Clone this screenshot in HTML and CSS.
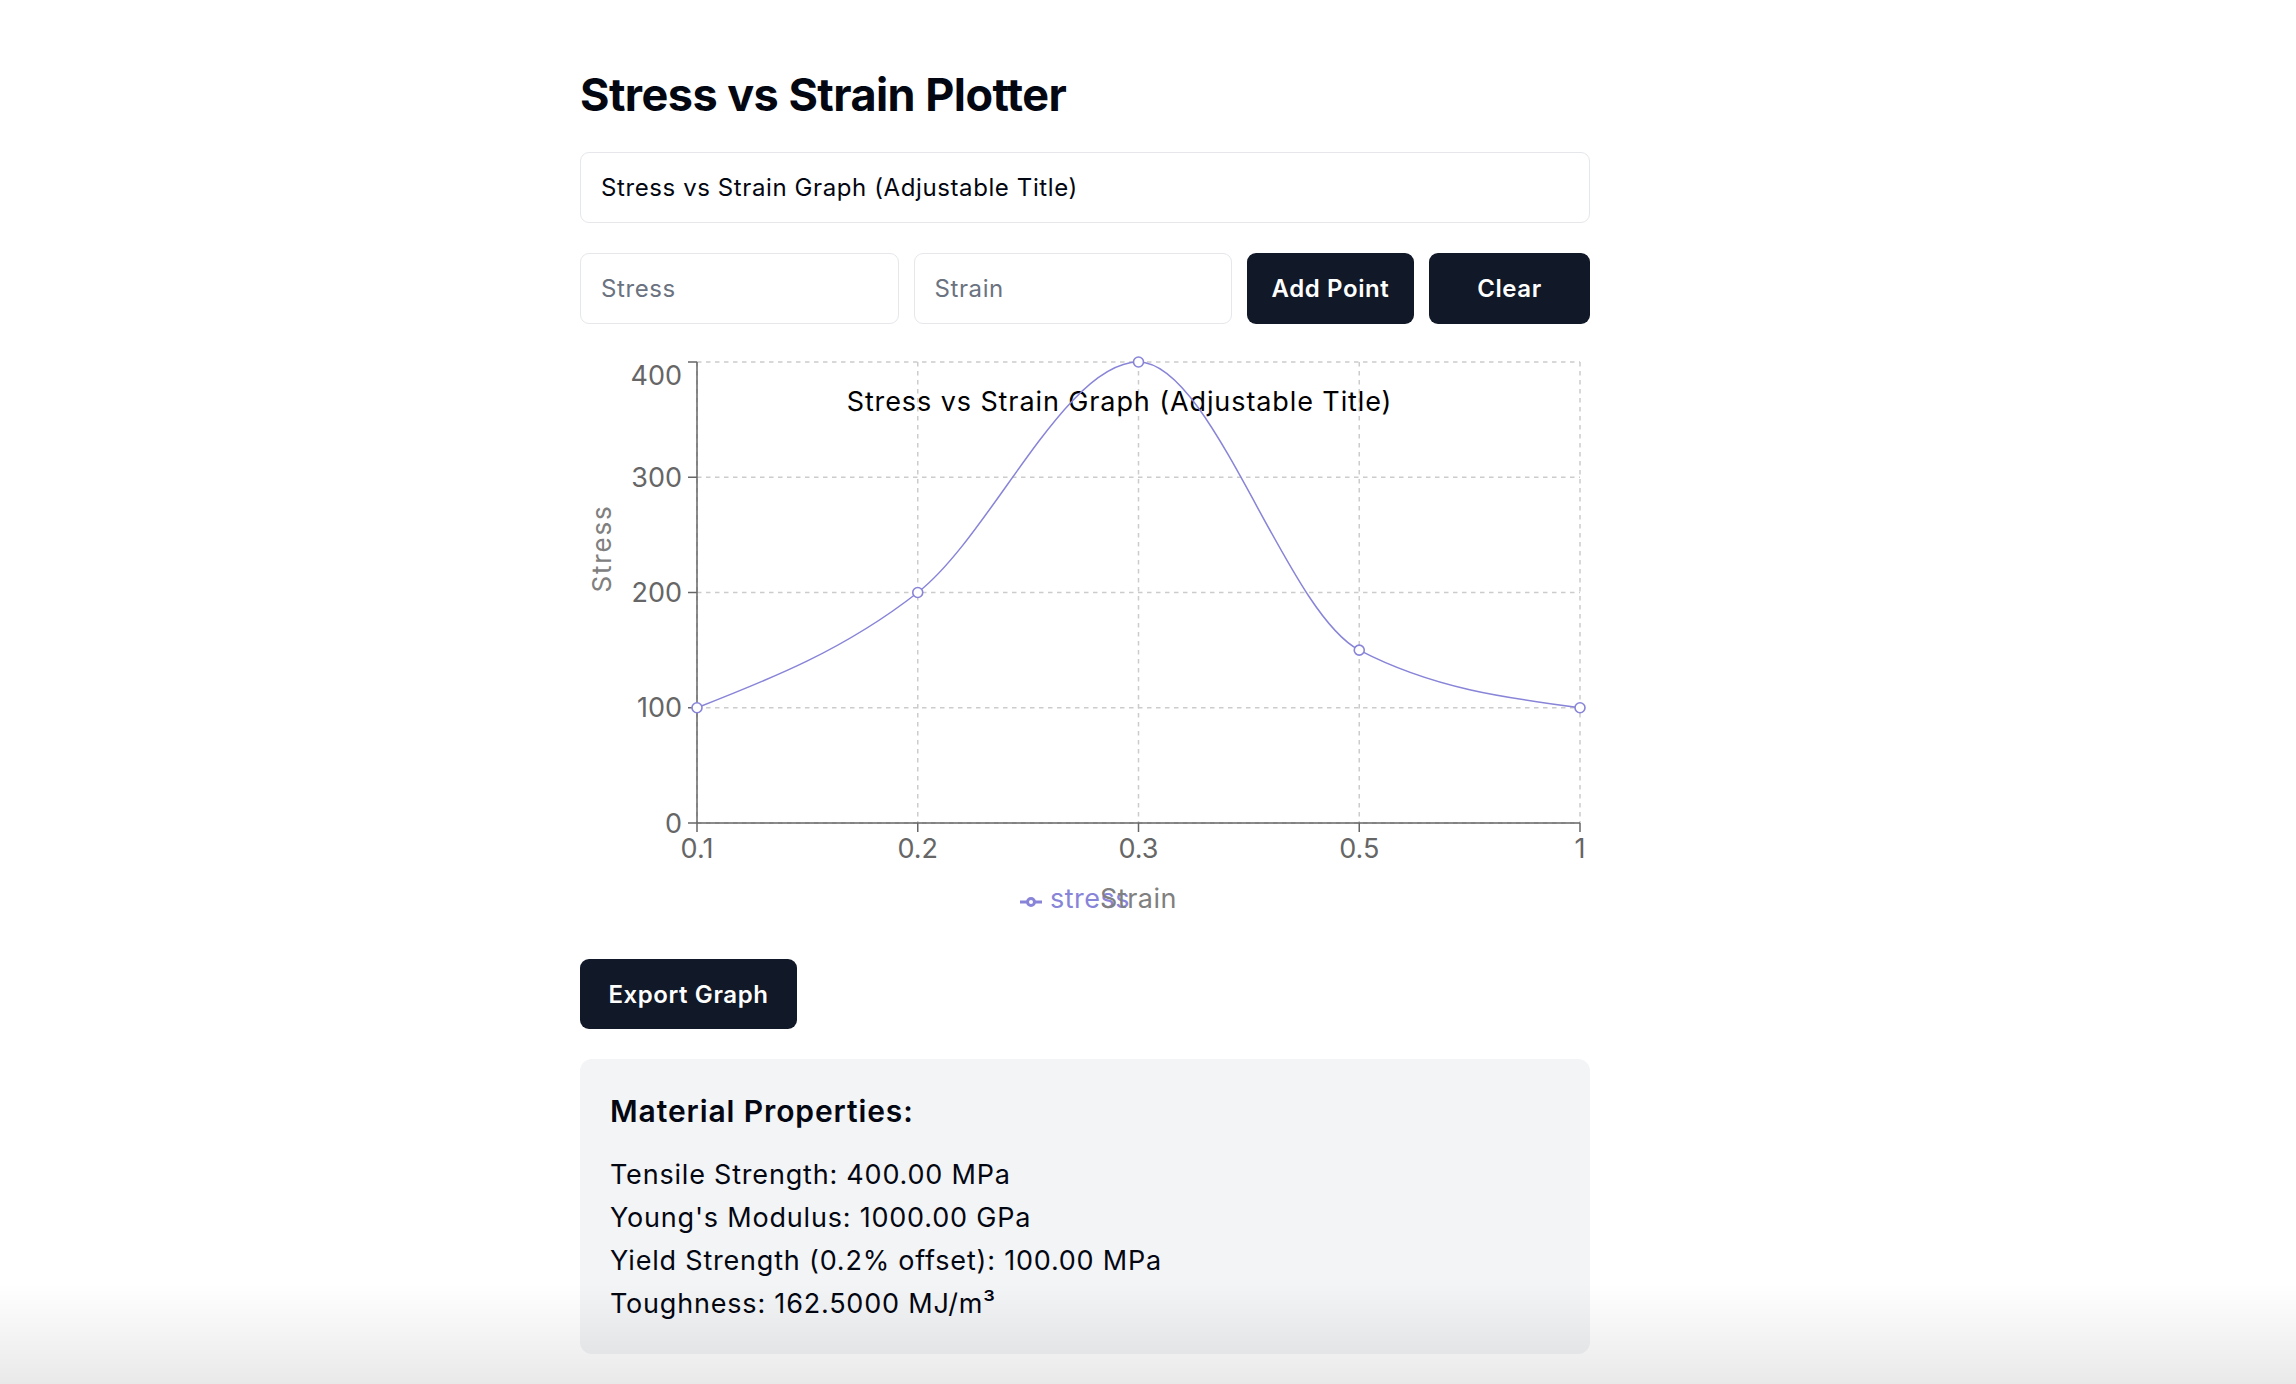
FILE: index.html
```html
<!DOCTYPE html>
<html lang="en">
<head>
<meta charset="utf-8">
<title>Stress vs Strain Plotter</title>
<link rel="stylesheet" href="styles.css">
</head>
<body>
<main class="container">
  <h1 class="page-title">Stress vs Strain Plotter</h1>
  <input class="field field-full" type="text" value="Stress vs Strain Graph (Adjustable Title)">
  <div class="point-row">
    <input class="field field-flex" type="text" placeholder="Stress">
    <input class="field field-flex" type="text" placeholder="Strain">
    <button class="btn btn-add">Add Point</button>
    <button class="btn btn-clear">Clear</button>
  </div>
  <div class="chart">
    <svg class="chart-svg" width="1010" height="575" viewBox="0 0 1010 575">
      <g class="grid">
        <line x1="117" y1="8" x2="1000" y2="8"/>
        <line x1="117" y1="123.25" x2="1000" y2="123.25"/>
        <line x1="117" y1="238.5" x2="1000" y2="238.5"/>
        <line x1="117" y1="353.75" x2="1000" y2="353.75"/>
        <line x1="117" y1="469" x2="1000" y2="469"/>
        <line x1="117" y1="8" x2="117" y2="469"/>
        <line x1="337.75" y1="8" x2="337.75" y2="469"/>
        <line x1="558.5" y1="8" x2="558.5" y2="469"/>
        <line x1="779.25" y1="8" x2="779.25" y2="469"/>
        <line x1="1000" y1="8" x2="1000" y2="469"/>
      </g>
      <g class="axis">
        <line x1="117" y1="8" x2="117" y2="469"/>
        <line x1="117" y1="469" x2="1000" y2="469"/>
        <line x1="108" y1="8" x2="117" y2="8"/>
        <line x1="108" y1="123.25" x2="117" y2="123.25"/>
        <line x1="108" y1="238.5" x2="117" y2="238.5"/>
        <line x1="108" y1="353.75" x2="117" y2="353.75"/>
        <line x1="108" y1="469" x2="117" y2="469"/>
        <line x1="117" y1="469" x2="117" y2="478"/>
        <line x1="337.75" y1="469" x2="337.75" y2="478"/>
        <line x1="558.5" y1="469" x2="558.5" y2="478"/>
        <line x1="779.25" y1="469" x2="779.25" y2="478"/>
        <line x1="1000" y1="469" x2="1000" y2="478"/>
      </g>
      <g class="tick-y">
        <text x="102" y="31">400</text>
        <text x="102" y="133">300</text>
        <text x="102" y="248">200</text>
        <text x="102" y="363">100</text>
        <text x="102" y="479">0</text>
      </g>
      <g class="tick-x">
        <text x="117" y="504">0.1</text>
        <text x="337.75" y="504">0.2</text>
        <text x="558.5" y="504">0.3</text>
        <text x="779.25" y="504">0.5</text>
        <text x="1000" y="504">1</text>
      </g>
      <text class="axis-label axis-label-y" transform="translate(30.5,238.5) rotate(-90)">Stress</text>
      <text class="chart-title" x="539.5" y="57">Stress vs Strain Graph (Adjustable Title)</text>
      <path class="series" d="M117,353.75C190.58,324.94,264.17,296.13,337.75,238.5C411.33,180.88,484.92,8,558.5,8C632.08,8,705.67,257.71,779.25,296.13C852.83,334.54,926.42,344.15,1000,353.75"/>
      <g class="dots">
        <circle cx="117" cy="353.75" r="5"/>
        <circle cx="337.75" cy="238.5" r="5"/>
        <circle cx="558.5" cy="8" r="5"/>
        <circle cx="779.25" cy="296.13" r="5"/>
        <circle cx="1000" cy="353.75" r="5"/>
      </g>
      <g class="legend">
        <path class="legend-icon" d="M440,548h7.5 A3.5,3.5,0,1,1,454.5,548 H462 M454.5,548 A3.5,3.5,0,1,1,447.5,548"/>
        <text class="legend-text" x="470" y="554">stress</text>
      </g>
      <text class="axis-label axis-label-x" x="558.5" y="554">Strain</text>
    </svg>
  </div>
  <button class="btn btn-export">Export Graph</button>
  <section class="props">
    <h2 class="props-title">Material Properties:</h2>
    <p class="prop">Tensile Strength: 400.00 MPa</p>
    <p class="prop">Young's Modulus: 1000.00 GPa</p>
    <p class="prop">Yield Strength (0.2% offset): 100.00 MPa</p>
    <p class="prop">Toughness: 162.5000 MJ/m³</p>
  </section>
</main>
<div class="bottom-fade"></div>
</body>
</html>
```

FILE: styles.css
```css
* { box-sizing: border-box; }
html, body { margin: 0; padding: 0; background: #ffffff; }
body {
  font-family: Inter, "Noto Sans", "Liberation Sans", sans-serif;
  color: #111827;
  overflow: hidden;
  height: 1384px;
}
.container {
  width: 1010px;
  margin-left: 580px;
  padding-top: 68px;
  display: flex;
  flex-direction: column;
  align-items: flex-start;
}
.page-title {
  margin: 0 0 30px;
  font-size: 45px;
  line-height: 54px;
  font-weight: 700;
  color: #030712;
  letter-spacing: -0.55px;
}
.field {
  height: 71px;
  border: 1.5px solid #e5e7eb;
  border-radius: 9px;
  padding: 0 20px;
  font-family: inherit;
  font-size: 24px;
  letter-spacing: 0.6px;
  color: #030712;
  background: #fff;
  outline: none;
}
.field::placeholder { color: #6b7280; }
.field-full { width: 100%; margin-bottom: 30px; }
.point-row {
  display: flex;
  gap: 15px;
  width: 100%;
  margin-bottom: 30px;
}
.field-flex { flex: 1 1 0; min-width: 0; }
.btn {
  height: 71px;
  border: none;
  border-radius: 9px;
  background: #111827;
  color: #ffffff;
  font-family: inherit;
  font-size: 24px;
  font-weight: 600;
  letter-spacing: 0.6px;
  padding: 0 24px;
  cursor: pointer;
}
.btn-add { width: 167px; }
.btn-clear { width: 161px; }
.btn-export { width: 217px; height: 70px; margin-bottom: 30px; }
.chart { width: 100%; height: 575px; margin-bottom: 30px; }
.chart-svg { display: block; font-family: Inter, "Noto Sans", sans-serif; font-size: 27px; }
.grid line { stroke: #cccccc; stroke-width: 1.5; stroke-dasharray: 4.5 4.5; }
.axis line { stroke: #666666; stroke-width: 1.5; }
.tick-y text { fill: #666666; text-anchor: end; }
.tick-x text { fill: #666666; text-anchor: middle; }
.axis-label { fill: #808080; letter-spacing: 0.5px; }
.axis-label-y { letter-spacing: 1.8px; font-size: 26px; }
.axis-label-x { text-anchor: middle; }
.chart-title { fill: #000000; text-anchor: middle; letter-spacing: 0.9px; }
.series { fill: none; stroke: #8884d8; stroke-width: 1.5; }
.dots circle { fill: #ffffff; stroke: #8884d8; stroke-width: 1.6; }
.legend-icon { fill: none; stroke: #8884d8; stroke-width: 3; }
.legend-text { fill: #8884d8; letter-spacing: 0.5px; }
.props {
  width: 100%;
  background: #f3f4f6;
  border-radius: 12px;
  padding: 31px 30px 29px;
}
.props-title {
  margin: 0 0 22px;
  font-size: 30px;
  line-height: 42px;
  font-weight: 600;
  color: #030712;
  letter-spacing: 0.9px;
}
.prop {
  margin: 0 0 1px;
  font-size: 27px;
  line-height: 42px;
  color: #030712;
  letter-spacing: 0.8px;
}
.prop:last-child { margin-bottom: 0; }
.bottom-fade {
  position: fixed;
  left: 0;
  right: 0;
  bottom: 0;
  height: 100px;
  background: linear-gradient(to bottom, rgba(0,0,0,0), rgba(0,0,0,0.085));
  pointer-events: none;
}
```
